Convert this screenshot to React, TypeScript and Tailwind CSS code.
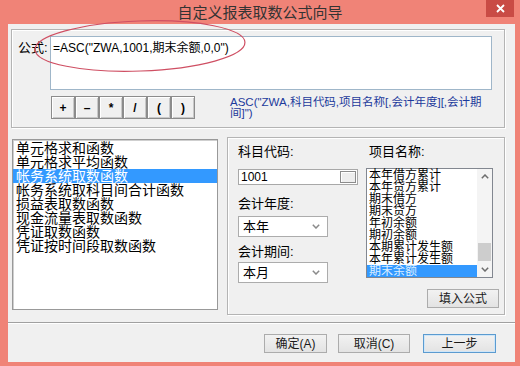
import React from "react";

const LEFT_ITEMS = [
  "单元格求和函数",
  "单元格求平均函数",
  "帐务系统取数函数",
  "帐务系统取科目间合计函数",
  "损益表取数函数",
  "现金流量表取数函数",
  "凭证取数函数",
  "凭证按时间段取数函数",
];

const ITEM_NAMES = [
  "本年借方累计",
  "本年贷方累计",
  "期末借方",
  "期末贷方",
  "年初余额",
  "期初余额",
  "本期累计发生额",
  "本年累计发生额",
  "期末余额",
];

const OPS = ["+", "–", "*", "/", "(", ")"];

function Chevron({ up = false, color = "#6d6d6d" }: { up?: boolean; color?: string }) {
  return (
    <svg width="8" height="5" viewBox="0 0 8 5">
      <path
        d={up ? "M0.8 4.2 L4 1 L7.2 4.2" : "M0.8 0.8 L4 4 L7.2 0.8"}
        fill="none"
        stroke={color}
        strokeWidth="1.5"
      />
    </svg>
  );
}

function WinButton({ label, w, focused = false }: { label: string; w: string; focused?: boolean }) {
  return (
    <div
      className={`flex h-[19px] items-center justify-center border bg-linear-to-b from-[#f2f2f2] to-[#e3e3e3] text-[12px] leading-none text-[#1a1a1a] ${w} ${
        focused ? "border-[#5b9bd0] shadow-[inset_0_0_0_1px_#cfe6f8]" : "border-[#acacac]"
      }`}
    >
      {label}
    </div>
  );
}

function Select({ value }: { value: string }) {
  return (
    <div className="flex h-[21px] w-[90px] items-center justify-between border border-[#acacac] bg-white pl-[4px] pr-[7px] text-[13px] leading-none">
      <span>{value}</span>
      <Chevron color="#8a8a8a" />
    </div>
  );
}

export default function App() {
  return (
    <div className="relative flex h-[366px] w-[520px] flex-col overflow-hidden bg-[#f08377] font-['Liberation_Sans','Noto_Sans_CJK_SC',sans-serif] text-black">
      {/* title bar */}
      <div className="relative flex h-[24px] shrink-0 items-center justify-center pt-[2px] text-[15px] text-[#333]">
        自定义报表取数公式向导
        <div className="absolute right-[6px] top-0 flex h-[17px] w-[28px] items-center justify-center bg-[#c94b45]">
          <svg width="9" height="9" viewBox="0 0 9 9">
            <path d="M1 1 L8 8 M8 1 L1 8" stroke="#fff" strokeWidth="1.8" />
          </svg>
        </div>
      </div>

      {/* client area */}
      <div className="ml-[8px] mr-[5px] flex h-[338px] flex-col bg-[#f0f0f0]">
        {/* formula group */}
        <div className="ml-[3px] mt-[5px] h-[99px] w-[494px] border border-[#b4b4b4] pl-[6px] pt-[6px] shadow-[inset_1px_1px_0_#fff,1px_1px_0_#fff]">
          <div className="flex">
            <div className="w-[32px] pt-[4px] text-[13px] leading-[16px]">公式:</div>
            <div className="h-[54px] w-[442px] border border-[#9fb6c9] bg-white pl-[2px] pt-[4px] text-[12px] leading-[14px]">
              =ASC("ZWA,1001,期末余额,0,0")
            </div>
          </div>
          <div className="mt-[6px] flex items-start pl-[33px]">
            {OPS.map((op) => (
              <div
                key={op}
                className="flex h-[23px] w-[24px] items-center justify-center border border-[#8c8c8c] bg-[#f0f0f0] text-[12px] font-bold leading-none shadow-[inset_1px_1px_0_#fff,inset_-1px_-1px_0_#c8c8c8]"
              >
                {op}
              </div>
            ))}
            <div className="ml-[35px] mt-[1px] text-[11.5px] leading-[11px] text-[#1c3a9c]">
              <div className="whitespace-nowrap">ASC("ZWA,科目代码,项目名称[,会计年度][,会计期</div>
              <div className="whitespace-nowrap">间]")</div>
            </div>
          </div>
        </div>

        {/* middle */}
        <div className="mt-[9px] flex items-start">
          {/* function list */}
          <div className="ml-[4px] mt-[2px] h-[171px] w-[206px] border border-[#999] bg-white pt-[1px] shadow-[inset_1px_1px_0_#cfcfcf]">
            {LEFT_ITEMS.map((item, i) => (
              <div
                key={item}
                className={`h-[14px] whitespace-nowrap pl-[3px] text-[14px] leading-[14px] ${
                  i === 2 ? "bg-[#3399ff] text-white" : ""
                }`}
              >
                {item}
              </div>
            ))}
          </div>

          {/* parameter group */}
          <div className="ml-[9px] flex h-[178px] w-[278px] border border-[#b4b4b4] pl-[10px] pr-[5px] shadow-[inset_1px_1px_0_#fff,1px_1px_0_#fff]">
            <div className="flex w-[120px] flex-col">
              <div className="mt-[5px] h-[17px] text-[13px] leading-[17px]">科目代码:</div>
              <div className="mt-[9px] flex h-[16px] w-[120px] items-center justify-between border border-[#a8a8a8] bg-white pl-[2px] pr-[1px] text-[12px] leading-none">
                <span>1001</span>
                <div className="h-[12px] w-[16px] border border-[#8c8c8c] bg-[#eeeeee] shadow-[inset_1px_1px_0_#fff]" />
              </div>
              <div className="mt-[10px] h-[17px] text-[13px] leading-[17px]">会计年度:</div>
              <div className="mt-[4px]">
                <Select value="本年" />
              </div>
              <div className="mt-[6px] h-[17px] text-[13px] leading-[17px]">会计期间:</div>
              <div className="mt-[2px]">
                <Select value="本月" />
              </div>
            </div>

            <div className="ml-[8px] flex w-[133px] flex-col">
              <div className="mt-[5px] h-[17px] pl-[3px] text-[13px] leading-[17px]">项目名称:</div>
              <div className="mt-[8px] flex h-[110px] w-[127px] border border-[#828790] bg-white">
                <div className="w-[110px]">
                  {ITEM_NAMES.map((name, i) => (
                    <div
                      key={name}
                      className={`h-[12px] whitespace-nowrap pl-[2px] text-[12px] leading-[12px] ${
                        i === 8 ? "bg-[#3399ff] text-[#dbeeff]" : ""
                      }`}
                    >
                      {name}
                    </div>
                  ))}
                </div>
                <div className="flex w-[15px] flex-col bg-[#f4f4f4]">
                  <div className="flex h-[15px] items-center justify-center">
                    <Chevron up />
                  </div>
                  <div className="mx-[1px] mt-[59px] h-[18px] bg-[#cdcdcd]" />
                  <div className="mt-auto flex h-[15px] items-center justify-center">
                    <Chevron />
                  </div>
                </div>
              </div>
              <div className="mt-[11px] self-end">
                <WinButton label="填入公式" w="w-[72px]" />
              </div>
            </div>
          </div>
        </div>

        {/* separator */}
        <div className="mt-[7px] h-[1px] bg-[#a0a0a0]" />
        <div className="h-[1px] bg-white" />

        {/* bottom buttons */}
        <div className="mt-[10px] flex justify-end pr-[19px]">
          <WinButton label="确定(A)" w="w-[63px]" />
          <div className="ml-[11px]">
            <WinButton label="取消(C)" w="w-[72px]" />
          </div>
          <div className="ml-[13px]">
            <WinButton label="上一步" w="w-[73px]" focused />
          </div>
        </div>
      </div>

      {/* red annotation ellipse */}
      <svg className="pointer-events-none absolute left-0 top-0" width="520" height="366">
        <ellipse
          cx="140"
          cy="46"
          rx="105"
          ry="25"
          fill="none"
          stroke="#cf4f63"
          strokeWidth="1.2"
          transform="rotate(-2 140 46)"
        />
      </svg>
    </div>
  );
}
